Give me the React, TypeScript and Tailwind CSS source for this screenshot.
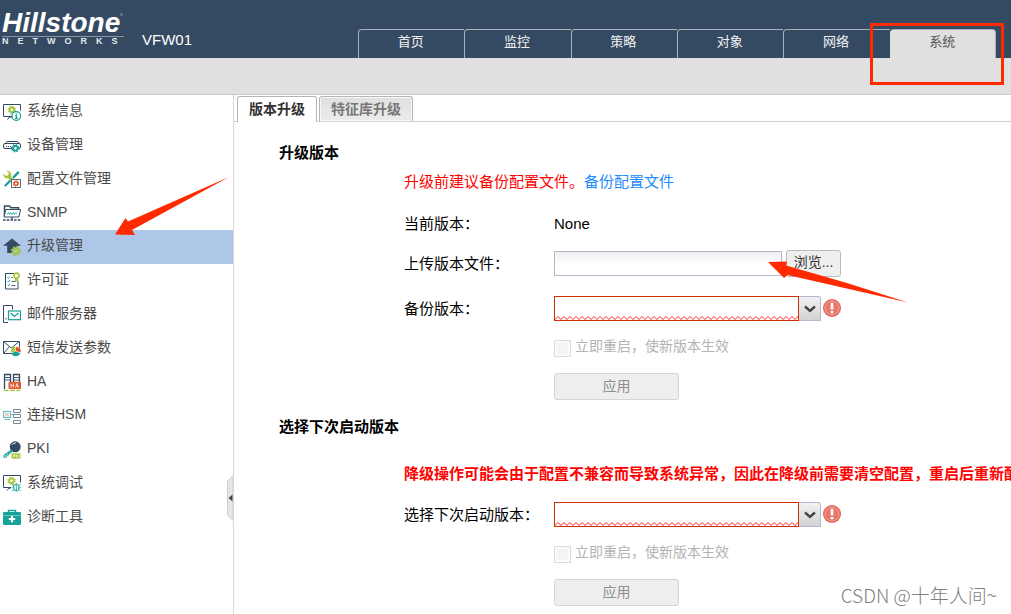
import { useId, type ReactNode } from "react";

const NAVY = "#344a62";
const TEAL = "#17a39a";
const LIME = "#a3c63c";
const ORANGE = "#e2592f";

function Icon({ children }: { children: ReactNode }) {
  return (
    <svg viewBox="0 0 18 18" className="block h-[18px] w-[18px] shrink-0" fill="none" aria-hidden="true">
      {children}
    </svg>
  );
}

function Gear({ cx, cy, r, color, hole = "#fff" }: { cx: number; cy: number; r: number; color: string; hole?: string }) {
  return (
    <g>
      <circle cx={cx} cy={cy} r={r * 0.82} fill={color} />
      <circle
        cx={cx}
        cy={cy}
        r={r * 0.86}
        stroke={color}
        strokeWidth={r * 0.46}
        strokeDasharray={`${r * 0.36} ${r * 0.315}`}
      />
      <circle cx={cx} cy={cy} r={r * 0.36} fill={hole} />
    </g>
  );
}

const icons = {
  info: (
    <Icon>
      <path d="M9 13.5H.5V1.5h17v6" stroke={NAVY} />
      <path d="M4.500 16.500 6.500 14h3" stroke={NAVY} />
      <Gear cx={8.800} cy={6.800} r={3.800} color={LIME} />
      <circle cx="13.300" cy="13" r="4.300" fill="#fff" stroke={TEAL} strokeWidth="1.200" />
      <path d="M13.300 10.200v1.300M12.200 12.600h1.300v2.700M12 15.300h2.800" stroke={TEAL} strokeWidth="1.300" />
    </Icon>
  ),
  device: (
    <Icon>
      <path d="M2.500 6.500 4 4.500h10.500l2 2.500" stroke={NAVY} />
      <rect x=".5" y="6.500" width="17" height="5" rx="1.500" stroke={NAVY} />
      <path d="M3 9.500h1M5 9.500h1M7 9.500h1" stroke={NAVY} />
      <Gear cx={12.300} cy={11.300} r={3.900} color={TEAL} />
    </Icon>
  ),
  config: (
    <Icon>
      <path d="M15.800 1.800 10 7.800M8 10 1.800 16" stroke={TEAL} strokeWidth="2.400" />
      <path
        d="M3.200.5 6 3 5 5.200l-2.300.8L.2 3.300C0 6.800 2 9 5.200 8.300l7.300 8 2.300-2.300L8 6.500C9 3.300 6.500.2 3.200.5Z"
        fill={LIME}
      />
      <rect x="8.500" y="9.500" width="9" height="8" fill="#fff" stroke={NAVY} strokeWidth=".8" />
      <Gear cx={13} cy={13.500} r={3} color={ORANGE} />
    </Icon>
  ),
  snmp: (
    <Icon>
      <path d="M1.500 12.500V2h5l1.300 1.700h7.700v1.800" stroke={NAVY} strokeWidth="1.500" />
      <path d="M1 13 2.800 5.500h14.700L16 13H1Z" fill="#fff" stroke={NAVY} />
      <path d="m4 10.500 1.500-2 1 2 1.500-2 1 2 1.500-2 1 2 1.500-2 1 1.500" stroke={TEAL} strokeWidth=".8" />
      <path d="M9 13v3M0 16h18" stroke={NAVY} strokeWidth="1.300" strokeDasharray="2.500 1.200" />
    </Icon>
  ),
  upgrade: (
    <Icon>
      <path d="M9 .5 18 7.700h-3.500V15H4.200V7.700H0L9 .5Z" fill={NAVY} />
      <Gear cx={12.800} cy={13} r={4.600} color={LIME} hole="#aec6e8" />
    </Icon>
  ),
  license: (
    <Icon>
      <path d="M11 1.500H2.500v15.500h12.500V9" stroke={NAVY} />
      <path d="M4.500 5.500 5.500 6.500 7 4.500M4.500 9 5.500 10 7 8M4.500 12.800l1 1 1.500-2" stroke={TEAL} strokeWidth="1" />
      <path d="M8.500 5.500H10M8.500 9.500h4M8.500 13.500h4" stroke={NAVY} strokeWidth=".9" />
      <path d="m12.300 6-.8 4 2-1 2 1-.8-4" fill={LIME} />
      <circle cx="13.500" cy="3.600" r="2.500" fill="#fff" stroke={LIME} strokeWidth="1.700" />
    </Icon>
  ),
  mail: (
    <Icon>
      <path d="M5 17.500H.5V.5h9v4M3 13v1.500" stroke={NAVY} />
      <rect x="5.500" y="6" width="12" height="8.700" fill="#fff" stroke={TEAL} strokeWidth="1.200" />
      <path d="m7.500 8 4 3.500 4-3.500" stroke={TEAL} strokeWidth="1.200" />
    </Icon>
  ),
  sms: (
    <Icon>
      <path d="M9 14.500H.5v-12h16v6" stroke={NAVY} />
      <path d="m.8 2.700 7.500 6.300L16 2.700M.8 14.200 6 8" stroke={NAVY} />
      <path d="M12.500 12V7.600A4.500 4.500 0 0 0 8.500 14Z" fill={LIME} />
      <path d="M13 12V8a4 4 0 0 1 4.500 5.500Z" fill={ORANGE} />
      <path d="m12.700 12.300 4.500 1.900A4.700 4.700 0 0 1 8.500 14.500Z" fill={TEAL} />
    </Icon>
  ),
  ha: (
    <Icon>
      <path d="M1.500 16V1.500h6V16M10.500 10V1.500h6V16" stroke={NAVY} strokeWidth="1.300" />
      <path d="M2 4.500h5M2 7h5M11 4.500h5M11 7h5" stroke={NAVY} strokeWidth=".9" />
      <path d="M.5 17.300h17" stroke={LIME} strokeWidth="1.200" strokeDasharray="5 1.500" />
      <rect x="5.500" y="8.700" width="12.500" height="7.300" rx="1.200" fill={ORANGE} />
      <path d="M8 10.500v4M8 12.500h2.500M10.500 10.500v4M12.500 14.500l1.500-4 1.500 4M13 13.300h2" stroke="#fff" strokeWidth=".8" />
    </Icon>
  ),
  hsm: (
    <Icon>
      <g opacity=".65">
        <rect x=".5" y="4.500" width="7" height="6" stroke={TEAL} strokeWidth="1.200" />
        <path d="m2 6 4 3M6 6 2 9" stroke={ORANGE} strokeWidth=".8" />
        <path d="M1.500 12.500H7M8 7.500h3" stroke={TEAL} />
        <path d="M10.500 2.500h7v3h-7zM10.500 7.500h7v3h-7zM10.500 13.500h7v3h-7z" stroke={NAVY} />
      </g>
    </Icon>
  ),
  pki: (
    <Icon>
      <circle cx="12.200" cy="5.800" r="5.500" fill={NAVY} />
      <path d="M9 3.800c1-1.500 2.800-2 4-1.700" stroke="#fff" strokeWidth=".9" />
      <path d="m8.500 9-7 5.200c-1 1-.8 2.300.5 2.300l1.500-.8.300-1.600 1.700-.3.400-1.500 1.600-.6 2-2" stroke={TEAL} strokeWidth="1.200" />
      <rect x="8.500" y="12.300" width="9" height="5.500" rx="1.300" fill={LIME} />
      <path d="M10.500 16.500V13.800h1.500v1.300h-1.500M13.300 13.600v3M15 13.600l-1.500 1.500 1.500 1.500M16.200 13.600v3" stroke="#fff" strokeWidth=".6" />
    </Icon>
  ),
  debug: (
    <Icon>
      <path d="M8 13.500H.5V1.500h17v7" stroke={NAVY} />
      <path d="M4 16.500 6 14h2" stroke={NAVY} />
      <Gear cx={8.500} cy={6.800} r={3.800} color={LIME} />
      <ellipse cx="13.300" cy="13.500" rx="2.600" ry="3.700" fill="#fff" stroke={TEAL} />
      <path d="M13.300 10v7M9 10.500l2 1.300M8.700 13.700H11M9 17l2-1.500M17.600 10.500l-2 1.300M18 13.700h-2.300M17.600 17l-2-1.500" stroke={TEAL} strokeWidth=".9" />
    </Icon>
  ),
  toolbox: (
    <Icon>
      <path d="M5.500 4.500V2.500h7v2" stroke={TEAL} strokeWidth="1.500" />
      <rect x="0" y="4" width="18" height="13" rx="1" fill={TEAL} />
      <path d="M0 7.500h18" stroke="#7fd0ca" strokeWidth=".7" />
      <path d="M9 7.800v6.400M5.800 11h6.400" stroke="#fff" strokeWidth="2.200" />
    </Icon>
  ),
};

const sections = ["首页", "监控", "策略", "对象", "网络", "系统"];

const menu: { label: string; icon: keyof typeof icons }[] = [
  { label: "系统信息", icon: "info" },
  { label: "设备管理", icon: "device" },
  { label: "配置文件管理", icon: "config" },
  { label: "SNMP", icon: "snmp" },
  { label: "升级管理", icon: "upgrade" },
  { label: "许可证", icon: "license" },
  { label: "邮件服务器", icon: "mail" },
  { label: "短信发送参数", icon: "sms" },
  { label: "HA", icon: "ha" },
  { label: "连接HSM", icon: "hsm" },
  { label: "PKI", icon: "pki" },
  { label: "系统调试", icon: "debug" },
  { label: "诊断工具", icon: "toolbox" },
];

function Logo() {
  return (
    <div className="w-[124px] pl-0.5 text-white">
      <div className="flex h-[27px] items-start">
        <span className="text-[28px] leading-[28px] font-bold italic">Hillstone</span>
        <span className="mt-1 h-[3px] w-[3px] shrink-0 rounded-full border border-[#8795a5]" />
      </div>
      <div className="border-t border-[#8795a5] text-[9px] leading-[9px] font-bold tracking-[9px] whitespace-nowrap text-[#e3e7eb]">
        NETWORKS
      </div>
    </div>
  );
}

function Header() {
  return (
    <header>
      <div className="flex h-[58px] bg-[#344a62]">
        <div className="pt-[9px]">
          <Logo />
        </div>
        <span className="mt-[30px] ml-[18px] text-[15px] leading-5 text-white">VFW01</span>
        <nav className="mt-[29px] mr-[15px] ml-auto grid w-[638px] grid-cols-6 text-[13px]">
          {sections.map((name) => {
            const active = name === "系统";
            return (
              <a
                key={name}
                href="#"
                aria-current={active ? "page" : undefined}
                className={
                  active
                    ? "relative rounded-t-[4px] border-t border-r border-[#a9b0b7] bg-[#e0e0e0] text-center leading-[24px] text-[#555]"
                    : "relative rounded-tl-[4px] border-t border-l border-[#a9b0b7] pr-0.5 text-center leading-[24px] text-[#f2f2f2]"
                }
              >
                {name}
                {active && (
                  <span className="pointer-events-none absolute -top-[7px] -right-[9px] -bottom-[27px] -left-5 border-[3px] border-[#ff2a00]" />
                )}
              </a>
            );
          })}
        </nav>
      </div>
      <div className="h-[37px] border-b border-[#c9c9c9] bg-[#e0e0e0]" />
    </header>
  );
}

function Sidebar() {
  return (
    <aside className="relative w-[234px] shrink-0 border-r border-[#d8d8d8]">
      <ul className="grid h-[439px] auto-rows-fr text-[14px] text-[#4a4a4a]">
        {menu.map(({ label, icon }) => (
          <li key={label} className={icon === "upgrade" ? "bg-[#aec6e8]" : ""}>
            <a href="#" className="flex h-full items-center gap-1.5 pl-[3px]">
              {icons[icon]}
              <span className="pb-0.5">{label}</span>
            </a>
          </li>
        ))}
      </ul>
      <button type="button" aria-label="收起" className="absolute top-[380px] right-0 h-[46px] w-[6px]">
        <svg viewBox="0 0 6 46" className="block h-full w-full" aria-hidden="true">
          <path d="M6 .5.500 6v34L6 45.500Z" fill="#e6e6e6" stroke="#cfcfcf" />
          <path d="M5.500 19.500v7L1.500 23Z" fill="#444" />
        </svg>
      </button>
      <svg
        viewBox="0 0 116 60"
        className="pointer-events-none absolute top-[81px] left-[114px] z-10 h-[60px] w-[116px]"
        aria-hidden="true"
      >
        <path d="M115 1 14 45.500 11.500 42 1 58.500l20 .5-3-5Z" fill="#ff2a00" />
      </svg>
    </aside>
  );
}

function Combo({ label }: { label: string }) {
  const id = useId();
  return (
    <div className="grid grid-cols-[150px_1fr] items-center">
      <label htmlFor={id} className="leading-[25px]">
        {label}
      </label>
      <div className="flex items-start gap-0.5">
        <div className="relative h-[25px] w-[267px]">
          <select id={id} className="block h-full w-[245px] appearance-none border border-[#cc3300] bg-white px-1" />
          <svg className="pointer-events-none absolute bottom-px left-px h-[4px] w-[243px]" aria-hidden="true">
            <defs>
              <pattern id={`${id}-wave`} width="6" height="4" patternUnits="userSpaceOnUse">
                <path d="M-1 4.500 3 .5l4 4" fill="none" stroke="#ff2222" />
              </pattern>
            </defs>
            <rect width="243" height="4" fill={`url(#${id}-wave)`} />
          </svg>
          <span className="pointer-events-none absolute top-0 right-0 flex h-[25px] w-[22px] items-center justify-center rounded-tr-[3px] border-t border-r border-b border-[#b5b8c8] bg-linear-to-b from-[#f2f2f2] to-[#d2d2d2]">
            <svg viewBox="0 0 12 8" className="h-2 w-3" fill="none" aria-hidden="true">
              <path d="m1 1.500 5 4.500 5-4.500" stroke="#444" strokeWidth="2.400" />
            </svg>
          </span>
        </div>
        <svg viewBox="0 0 18 18" className="mt-[3px] h-[18px] w-[18px]" aria-hidden="true">
          <circle cx="9" cy="9" r="9" fill="#df6253" />
          <circle cx="9" cy="9" r="7.200" fill="#e8796a" stroke="#f5b3a8" strokeWidth=".8" />
          <path d="M7.700 3.800h2.600v6.800H7.700zM7.700 12h2.600v2.300H7.700z" fill="#fff" />
        </svg>
      </div>
    </div>
  );
}

function RestartAndApply() {
  return (
    <div className="ml-[150px]">
      <label className="mt-[17px] flex h-5 items-center gap-1 text-[14px] leading-[17px] text-[#b3b3b3]">
        <input
          type="checkbox"
          disabled
          className="m-0 h-[17px] w-[17px] appearance-none border border-[#dcdcdc] bg-[#f3f4f5] shadow-[inset_0_0_0_2px_#fafafa]"
        />
        <span className="pb-1">立即重启，使新版本生效</span>
      </label>
      <button
        type="button"
        disabled
        className="mt-[15px] block h-[27px] w-[125px] rounded-[3px] border border-[#d4d4d4] bg-[#eee] pb-0.5 text-[14px] leading-[22px] text-[#8e8e8e]"
      >
        应用
      </button>
    </div>
  );
}

function Main() {
  return (
    <main className="min-w-0 flex-1 overflow-hidden">
      <div role="tablist" className="flex h-[27px] items-end gap-0.5 border-b border-[#d0d0d0] pl-[3px] text-[14px] font-bold">
        <button
          role="tab"
          aria-selected="true"
          className="-mb-px h-[26px] rounded-t-[3px] border border-b-0 border-[#b5b5b5] bg-white px-[11px] pb-0.5 leading-[22px] text-[#333]"
        >
          版本升级
        </button>
        <button
          role="tab"
          aria-selected="false"
          className="h-[25px] rounded-t-[3px] border border-b-0 border-[#b5b5b5] bg-linear-to-b from-[#e0e0e0] to-[#ececec] px-[11px] leading-[22px] text-[#777] shadow-[inset_0_0_0_1px_#f8f8f8]"
        >
          特征库升级
        </button>
      </div>
      <form className="pl-[45px] text-[15px] leading-5 text-black">
        <section className="pt-[21px]">
          <h2 className="font-bold">升级版本</h2>
          <div className="pl-[125px]">
            <p className="mt-[9px] text-[#ff0000]">
              升级前建议备份配置文件。
              <a href="#" className="text-[#1e8cff]">
                备份配置文件
              </a>
            </p>
            <div className="mt-[22px] grid grid-cols-[150px_1fr]">
              <span>当前版本：</span>
              <span>None</span>
            </div>
            <div className="mt-4 mb-[19px] grid grid-cols-[150px_1fr] items-center">
              <label htmlFor="image-file">上传版本文件：</label>
              <div className="relative flex items-center gap-1">
                <input
                  id="image-file"
                  type="text"
                  readOnly
                  className="h-[25px] w-[228px] border border-[#b5b8c8] bg-linear-to-b from-[#eceff0] to-white to-50% px-1"
                />
                <button
                  type="button"
                  className="h-[27px] w-[55px] rounded-[3px] border border-[#bbb] bg-[#efefef] pb-1 text-[14px] leading-[20px] text-[#333]"
                >
                  浏览...
                </button>
                <svg
                  viewBox="0 0 142 42"
                  className="pointer-events-none absolute top-[11px] left-[213px] z-10 h-[42px] w-[142px]"
                  aria-hidden="true"
                >
                  <path d="M141 41.500 20.500 14 17 17 1 1 20 .5 19 4.500 80 22Z" fill="#ff2a00" />
                </svg>
              </div>
            </div>
            <Combo label="备份版本：" />
            <RestartAndApply />
          </div>
        </section>
        <section className="pt-[17px]">
          <h2 className="font-bold">选择下次启动版本</h2>
          <div className="pl-[125px]">
            <p className="mt-[27px] mb-[18px] font-bold whitespace-nowrap text-[#ff0000]">
              降级操作可能会由于配置不兼容而导致系统异常，因此在降级前需要清空配置，重启后重新配
            </p>
            <Combo label="选择下次启动版本：" />
            <RestartAndApply />
          </div>
        </section>
      </form>
    </main>
  );
}

export default function App() {
  return (
    <div className="relative flex min-h-screen flex-col overflow-hidden bg-white font-['Liberation_Sans','Noto_Sans_CJK_SC',sans-serif]">
      <Header />
      <div className="flex flex-1">
        <Sidebar />
        <Main />
      </div>
      <span className="absolute right-[14px] bottom-[5px] font-['Noto_Sans_CJK_SC',sans-serif] text-[19px] leading-7 font-light text-[#808080]">
        CSDN @十年人间~
      </span>
    </div>
  );
}
